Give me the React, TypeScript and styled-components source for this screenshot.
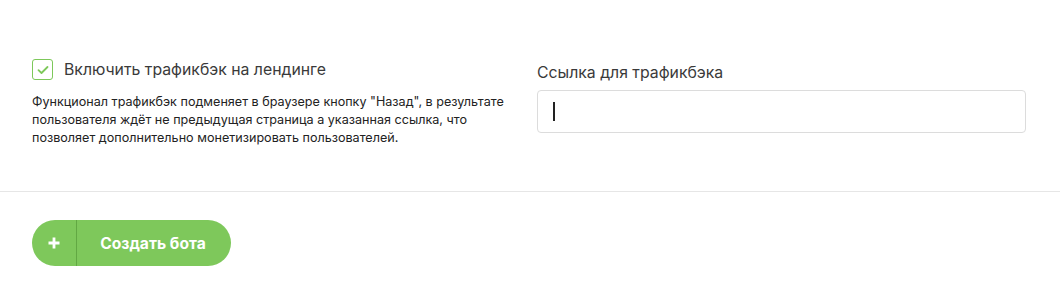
import React from 'react'
import styled, { createGlobalStyle } from 'styled-components'

const GlobalStyle = createGlobalStyle`
  html, body {
    margin: 0;
    padding: 0;
    background: #fff;
    font-family: Inter, "Noto Sans", sans-serif;
    color: #333;
  }
`

const Page = styled.div`
  width: 1060px;
`

const Settings = styled.section`
  display: grid;
  grid-template-columns: 473px 489px;
  column-gap: 32px;
  padding: 59px 0 0 32px;
  height: 132px;
  border-bottom: 1px solid #e6e6e6;
`

const LeftCol = styled.div`
  display: flex;
  flex-direction: column;
`

const CheckRow = styled.label`
  display: flex;
  align-items: center;
  gap: 11px;
  cursor: pointer;
`

const CheckBox = styled.span`
  width: 19px;
  height: 19px;
  border: 1.5px solid #7dc85a;
  border-radius: 3px;
  display: flex;
  align-items: center;
  justify-content: center;
`

const CheckLabel = styled.span`
  font-size: 15.8px;
  color: #3a3a3a;
`

const Hint = styled.p`
  margin: 13px 0 0;
  font-size: 12.6px;
  line-height: 18px;
  color: #222;
`

const RightCol = styled.div`
  display: flex;
  flex-direction: column;
  padding-top: 4px;
`

const FieldLabel = styled.span`
  font-size: 15.8px;
  color: #3a3a3a;
  margin-bottom: 8px;
`

const Input = styled.div`
  height: 41px;
  border: 1px solid #dcdcdc;
  border-radius: 4px;
  display: flex;
  align-items: center;
  padding-left: 15px;
`

const Caret = styled.span`
  width: 1.5px;
  height: 19px;
  background: #222;
`

const Footer = styled.div`
  padding: 28px 32px 0;
`

const CreateButton = styled.button`
  display: flex;
  align-items: stretch;
  width: 199px;
  height: 46px;
  border: none;
  border-radius: 23px;
  background: #7ec85b;
  color: #fff;
  padding: 0;
  cursor: pointer;
  font-family: inherit;
`

const PlusPart = styled.span`
  width: 44px;
  border-right: 1px solid #62a843;
  display: flex;
  align-items: center;
  justify-content: center;
`

const ButtonText = styled.span`
  flex: 1;
  display: flex;
  align-items: center;
  justify-content: center;
  font-size: 15.6px;
  font-weight: 700;
  padding-right: 2px;
`

export default function App() {
  return (
    <Page>
      <GlobalStyle />
      <Settings>
        <LeftCol>
          <CheckRow>
            <CheckBox>
              <svg width="12" height="10" viewBox="0 0 12 10">
                <path d="M1.5 5.2 L4.5 8 L10.5 2" fill="none" stroke="#7dc85a" strokeWidth="1.8" strokeLinecap="round" strokeLinejoin="round" />
              </svg>
            </CheckBox>
            <CheckLabel>Включить трафикбэк на лендинге</CheckLabel>
          </CheckRow>
          <Hint>
            Функционал трафикбэк подменяет в браузере кнопку "Назад", в результате
            пользователя ждёт не предыдущая страница а указанная ссылка, что
            позволяет дополнительно монетизировать пользователей.
          </Hint>
        </LeftCol>
        <RightCol>
          <FieldLabel>Ссылка для трафикбэка</FieldLabel>
          <Input>
            <Caret />
          </Input>
        </RightCol>
      </Settings>
      <Footer>
        <CreateButton>
          <PlusPart>
            <svg width="12" height="12" viewBox="0 0 12 12">
              <path d="M6 0.5 V11.5 M0.5 6 H11.5" stroke="#fff" strokeWidth="2.8" />
            </svg>
          </PlusPart>
          <ButtonText>Создать бота</ButtonText>
        </CreateButton>
      </Footer>
    </Page>
  )
}
